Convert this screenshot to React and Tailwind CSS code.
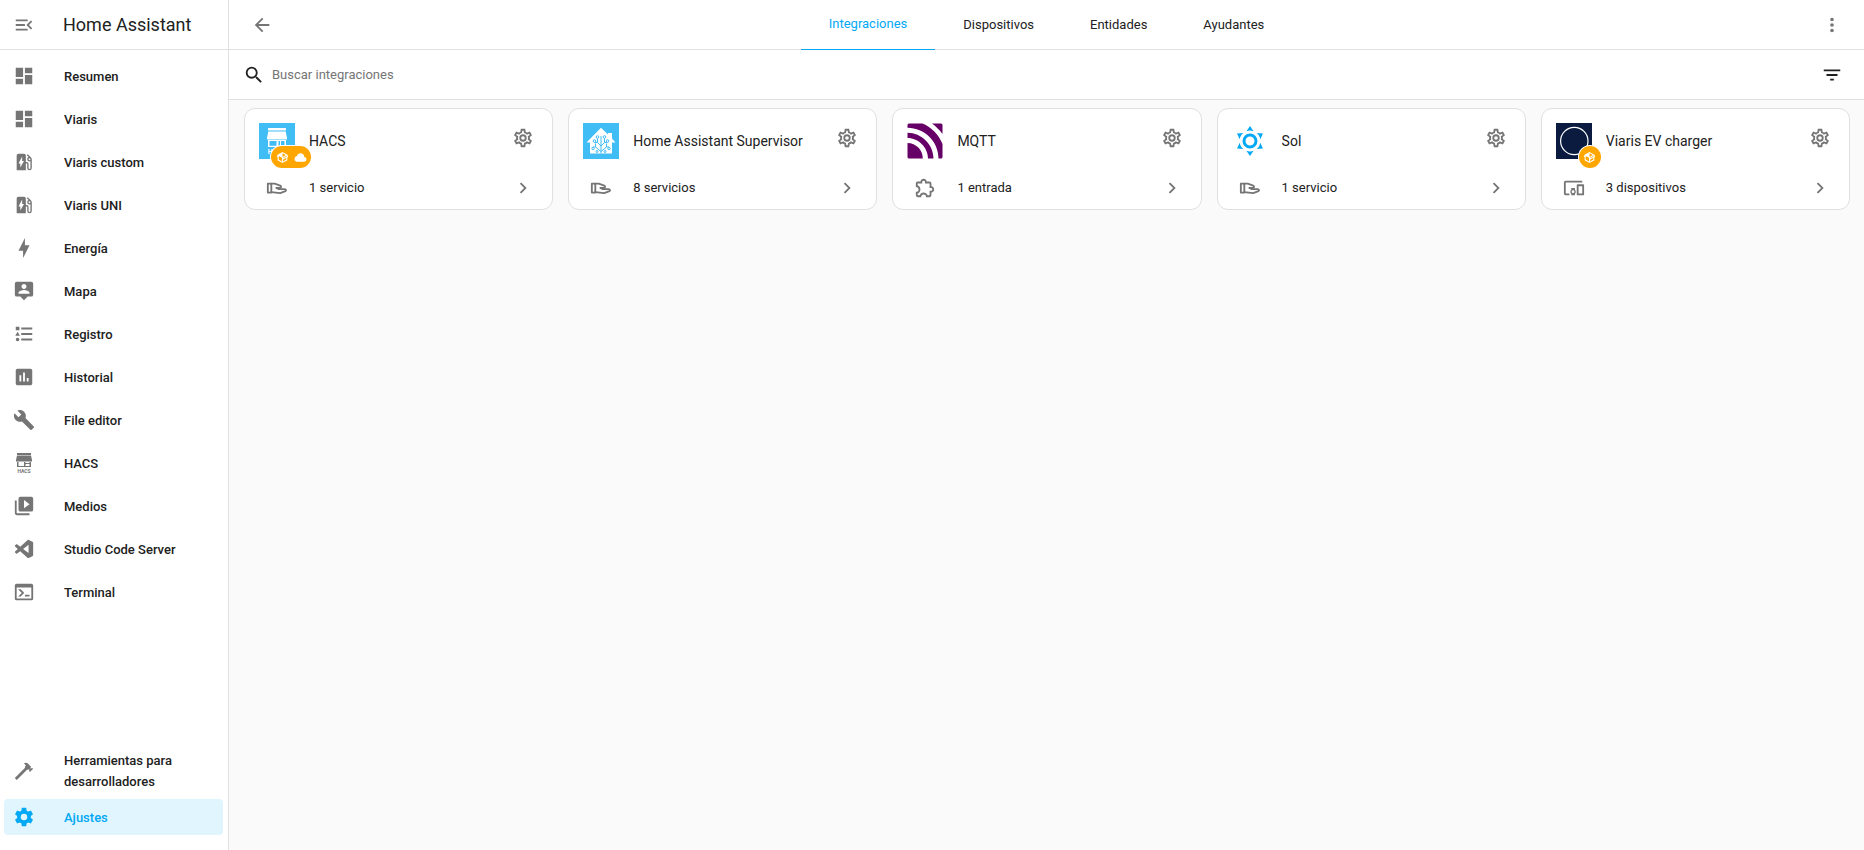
import { useState } from "react";

const icons = {
    menuOpen: "M21,15.61L19.59,17L14.58,12L19.59,7L21,8.39L17.44,12L21,15.61M3,6H16V8H3V6M3,13V11H13V13H3M3,18V16H16V18H3Z",
    dashboard: "M13,3V9H21V3M13,21H21V11H13M3,21H11V15H3M3,13H11V3H3V13Z",
    evStation: "M19.77,7.23L19.78,7.22L16.06,3.5L15,4.56L17.11,6.67C16.17,7.03 15.5,7.93 15.5,9A2.5,2.5 0 0,0 18,11.5C18.36,11.5 18.69,11.42 19,11.29V18.5A1,1 0 0,1 18,19.5A1,1 0 0,1 17,18.5V14A2,2 0 0,0 15,12H14V5A2,2 0 0,0 12,3H6A2,2 0 0,0 4,5V21H14V13.5H15.5V18.5A2.5,2.5 0 0,0 18,21A2.5,2.5 0 0,0 20.5,18.5V9C20.5,8.31 20.22,7.68 19.77,7.23M18,10A1,1 0 0,1 17,9A1,1 0 0,1 18,8A1,1 0 0,1 19,9A1,1 0 0,1 18,10M8,18V13.5H6L10,6V11H12L8,18Z",
    bolt: "M11 15H6L13 1V9H18L11 23V15Z",
    map: "M20,2H4A2,2 0 0,0 2,4V16A2,2 0 0,0 4,18H8L12,22L16,18H20A2,2 0 0,0 22,16V4A2,2 0 0,0 20,2M12,4.3C13.5,4.3 14.7,5.5 14.7,7C14.7,8.5 13.5,9.7 12,9.7C10.5,9.7 9.3,8.5 9.3,7C9.3,5.5 10.5,4.3 12,4.3M18,15H6V14.1C6,12.1 10,11 12,11C14,11 18,12.1 18,14.1V15Z",
    list: "M5,9.5L7.5,14H2.5L5,9.5M3,4H7V8H3V4M5,20A2,2 0 0,0 7,18A2,2 0 0,0 5,16A2,2 0 0,0 3,18A2,2 0 0,0 5,20M9,5V7H21V5H9M9,19H21V17H9V19M9,13H21V11H9V13Z",
    chart: "M9 17H7V10H9V17M13 17H11V7H13V17M17 17H15V13H17V17M19 3H5C3.89 3 3 3.89 3 5V19C3 20.11 3.89 21 5 21H19C20.11 21 21 20.11 21 19V5C21 3.89 20.11 3 19 3Z",
    wrench: "M22.7,19L13.6,9.9C14.5,7.6 14,4.9 12.1,3C10.1,1 7.1,0.6 4.7,1.7L9,6L6,9L1.6,4.7C0.4,7.1 0.9,10.1 2.9,12.1C4.8,14 7.5,14.5 9.8,13.6L18.9,22.7C19.3,23.1 19.9,23.1 20.3,22.7L22.6,20.4C23.1,20 23.1,19.3 22.7,19Z",
    media: "M4,6H2V20A2,2 0 0,0 4,22H18V20H4V6M20,2H8A2,2 0 0,0 6,4V16A2,2 0 0,0 8,18H20A2,2 0 0,0 22,16V4A2,2 0 0,0 20,2M12,14.5V5.5L18,10L12,14.5Z",
    vscode: "M21.29 4.1L17.18 2.12C16.7 1.89 16.13 1.98 15.76 2.36L7.88 9.54L4.45 6.94C4.13 6.69 3.68 6.71 3.38 6.99L2.28 8C1.91 8.31 1.91 8.88 2.27 9.21L5.25 11.93L2.27 14.65C1.91 14.98 1.91 15.55 2.28 15.88L3.38 16.88C3.68 17.15 4.13 17.17 4.45 16.93L7.88 14.33L15.76 21.5C16.13 21.9 16.7 22 17.18 21.76L21.29 19.78C21.73 19.57 22 19.13 22 18.65V5.23C22 4.75 21.73 4.31 21.29 4.1M17 16.47L11.02 11.94L17 7.41V16.47Z",
    console: "M20,19V7H4V19H20M20,3A2,2 0 0,1 22,5V19A2,2 0 0,1 20,21H4A2,2 0 0,1 2,19V5C2,3.89 2.9,3 4,3H20M13,17V15H18V17H13M9.58,13L5.57,9H8.4L11.7,12.3C12.09,12.69 12.09,13.33 11.7,13.72L8.42,17H5.59L9.58,13Z",
    hammer: "M2,19.63L13.43,8.2L12.72,7.5L14.14,6.07L12,3.89C13.2,2.7 15.09,2.7 16.27,3.89L19.87,7.5L18.45,8.91H21.29L22,9.62L18.45,13.21L17.74,12.5V9.62L16.27,11.04L15.56,10.33L4.13,21.76L2,19.63Z",
    cog: "M12,15.5A3.5,3.5 0 0,1 8.5,12A3.5,3.5 0 0,1 12,8.5A3.5,3.5 0 0,1 15.5,12A3.5,3.5 0 0,1 12,15.5M19.43,12.97C19.47,12.65 19.5,12.33 19.5,12C19.5,11.67 19.47,11.34 19.43,11L21.54,9.37C21.73,9.22 21.78,8.95 21.66,8.73L19.66,5.27C19.54,5.05 19.27,4.96 19.05,5.05L16.56,6.05C16.04,5.66 15.5,5.32 14.87,5.07L14.5,2.42C14.46,2.18 14.25,2 14,2H10C9.75,2 9.54,2.18 9.5,2.42L9.13,5.07C8.5,5.32 7.96,5.66 7.44,6.05L4.95,5.05C4.73,4.96 4.46,5.05 4.34,5.27L2.34,8.73C2.21,8.95 2.27,9.22 2.46,9.37L4.57,11C4.53,11.34 4.5,11.67 4.5,12C4.5,12.33 4.53,12.65 4.57,12.97L2.46,14.63C2.27,14.78 2.21,15.05 2.34,15.27L4.34,18.73C4.46,18.95 4.73,19.03 4.95,18.95L7.44,17.94C7.96,18.34 8.5,18.68 9.13,18.93L9.5,21.58C9.54,21.82 9.75,22 10,22H14C14.25,22 14.46,21.82 14.5,21.58L14.87,18.93C15.5,18.67 16.04,18.34 16.56,17.94L19.05,18.95C19.27,19.03 19.54,18.95 19.66,18.73L21.66,15.27C21.78,15.05 21.73,14.78 21.54,14.63L19.43,12.97Z",
    cogOutline: "M12,8A4,4 0 0,1 16,12A4,4 0 0,1 12,16A4,4 0 0,1 8,12A4,4 0 0,1 12,8M12,10A2,2 0 0,0 10,12A2,2 0 0,0 12,14A2,2 0 0,0 14,12A2,2 0 0,0 12,10M10,22C9.75,22 9.54,21.82 9.5,21.58L9.13,18.93C8.5,18.68 7.96,18.34 7.44,17.94L4.95,18.95C4.73,19.03 4.46,18.95 4.34,18.73L2.34,15.27C2.21,15.05 2.27,14.78 2.46,14.63L4.57,12.97L4.5,12L4.57,11L2.46,9.37C2.27,9.22 2.21,8.95 2.34,8.73L4.34,5.27C4.46,5.05 4.73,4.96 4.95,5.05L7.44,6.05C7.96,5.66 8.5,5.32 9.13,5.07L9.5,2.42C9.54,2.18 9.75,2 10,2H14C14.25,2 14.46,2.18 14.5,2.42L14.87,5.07C15.5,5.32 16.04,5.66 16.56,6.05L19.05,5.05C19.27,4.96 19.54,5.05 19.66,5.27L21.66,8.73C21.79,8.95 21.73,9.22 21.54,9.37L19.43,11L19.5,12L19.43,13L21.54,14.63C21.73,14.78 21.79,15.05 21.66,15.27L19.66,18.73C19.54,18.95 19.27,19.04 19.05,18.95L16.56,17.95C16.04,18.34 15.5,18.68 14.87,18.93L14.5,21.58C14.46,21.82 14.25,22 14,22H10M11.25,4L10.88,6.61C9.68,6.86 8.62,7.5 7.85,8.39L5.44,7.35L4.69,8.65L6.8,10.2C6.4,11.37 6.4,12.64 6.8,13.8L4.68,15.36L5.43,16.66L7.86,15.62C8.63,16.5 9.68,17.14 10.87,17.38L11.24,20H12.76L13.13,17.39C14.32,17.14 15.37,16.5 16.14,15.62L18.57,16.66L19.32,15.36L17.2,13.81C17.6,12.64 17.6,11.37 17.2,10.2L19.31,8.65L18.56,7.35L16.15,8.39C15.38,7.5 14.32,6.86 13.12,6.62L12.75,4H11.25Z",
    arrowLeft: "M20,11V13H8L13.5,18.5L12.08,19.92L4.16,12L12.08,4.08L13.5,5.5L8,11H20Z",
    dots: "M12,16A2,2 0 0,1 14,18A2,2 0 0,1 12,20A2,2 0 0,1 10,18A2,2 0 0,1 12,16M12,10A2,2 0 0,1 14,12A2,2 0 0,1 12,14A2,2 0 0,1 10,12A2,2 0 0,1 12,10M12,4A2,2 0 0,1 14,6A2,2 0 0,1 12,8A2,2 0 0,1 10,6A2,2 0 0,1 12,4Z",
    magnify: "M9.5,3A6.5,6.5 0 0,1 16,9.5C16,11.11 15.41,12.59 14.44,13.73L14.71,14H15.5L20.5,19L19,20.5L14,15.5V14.71L13.73,14.44C12.59,15.41 11.11,16 9.5,16A6.5,6.5 0 0,1 3,9.5A6.5,6.5 0 0,1 9.5,3M9.5,5C7,5 5,7 5,9.5C5,12 7,14 9.5,14C12,14 14,12 14,9.5C14,7 12,5 9.5,5Z",
    filter: "M6,13H18V11H6M3,6V8H21V6M10,18H14V16H10V18Z",
    chevron: "M8.59,16.58L13.17,12L8.59,7.41L10,6L16,12L10,18L8.59,16.58Z",
    puzzle: "M22,13.5C22,15.26 20.7,16.72 19,16.96V20A2,2 0 0,1 17,22H13.2V21.7A2.7,2.7 0 0,0 10.5,19C9,19 7.8,20.21 7.8,21.7V22H4A2,2 0 0,1 2,20V16.2H2.3C3.79,16.2 5,15 5,13.5C5,12 3.79,10.8 2.3,10.8H2V7A2,2 0 0,1 4,5H7.04C7.28,3.3 8.74,2 10.5,2C12.26,2 13.72,3.3 13.96,5H17A2,2 0 0,1 19,7V10.04C20.7,10.28 22,11.74 22,13.5M17,15H18.5A1.5,1.5 0 0,0 20,13.5A1.5,1.5 0 0,0 18.5,12H17V7H12V5.5A1.5,1.5 0 0,0 10.5,4A1.5,1.5 0 0,0 9,5.5V7H4V9.12C5.76,9.8 7,11.5 7,13.5C7,15.5 5.75,17.2 4,17.88V20H6.12C6.8,18.25 8.5,17 10.5,17C12.5,17 14.2,18.25 14.88,20H17V15Z",
    devices: "M3 6H21V4H3C1.9 4 1 4.9 1 6V18C1 19.1 1.9 20 3 20H7V18H3V6M13 12H9V13.78C8.39 14.33 8 15.11 8 16C8 16.89 8.39 17.67 9 18.22V20H13V18.22C13.61 17.67 14 16.88 14 16S13.61 14.33 13 13.78V12M11 17.5C10.17 17.5 9.5 16.83 9.5 16S10.17 14.5 11 14.5 12.5 15.17 12.5 16 11.83 17.5 11 17.5M22 8H16C15.5 8 15 8.5 15 9V19C15 19.5 15.5 20 16 20H22C22.5 20 23 19.5 23 19V9C23 8.5 22.5 8 22 8M21 18H17V10H21V18Z",
    package: "M2,10.96C1.5,10.68 1.35,10.07 1.63,9.59L3.13,7C3.24,6.8 3.41,6.66 3.6,6.58L11.43,2.18C11.59,2.06 11.79,2 12,2C12.21,2 12.41,2.06 12.57,2.18L20.47,6.62C20.66,6.72 20.82,6.88 20.91,7.08L22.36,9.6C22.64,10.08 22.47,10.69 22,10.96L21,11.54V16.5C21,16.88 20.79,17.21 20.47,17.38L12.57,21.82C12.41,21.94 12.21,22 12,22C11.79,22 11.59,21.94 11.43,21.82L3.53,17.38C3.21,17.21 3,16.88 3,16.5V10.96C2.7,11.13 2.32,11.14 2,10.96M12,4.15V4.15L12,10.85V10.85L17.96,7.5L12,4.15M5,15.91L11,19.29V12.58L5,9.21V15.91M19,15.91V12.69L14,15.59C13.67,15.77 13.3,15.76 13,15.6V19.29L19,15.91M13.85,13.36L20.13,9.73L19.55,8.72L13.27,12.35L13.85,13.36Z",
    cloud: "M6.5 20Q4.22 20 2.61 18.43 1 16.85 1 14.58 1 12.63 2.17 11.1 3.35 9.57 5.25 9.15 5.88 6.85 7.75 5.43 9.63 4 12 4 14.93 4 16.96 6.04 19 8.07 19 11 20.73 11.2 21.86 12.5 23 13.78 23 15.5 23 17.38 21.69 18.69 20.38 20 18.5 20Z",
    sunny: "M12,7A5,5 0 0,1 17,12A5,5 0 0,1 12,17A5,5 0 0,1 7,12A5,5 0 0,1 12,7M12,9A3,3 0 0,0 9,12A3,3 0 0,0 12,15A3,3 0 0,0 15,12A3,3 0 0,0 12,9M12,2L14.39,5.42C13.65,5.15 12.84,5 12,5C11.16,5 10.35,5.15 9.61,5.42L12,2M3.34,7L7.5,6.65C6.9,7.16 6.36,7.78 5.94,8.5C5.5,9.24 5.25,10 5.11,10.79L3.34,7M3.36,17L5.12,13.23C5.26,14 5.53,14.78 5.95,15.5C6.37,16.24 6.91,16.86 7.5,17.37L3.36,17M20.65,7L18.88,10.79C18.74,10 18.47,9.23 18.05,8.5C17.63,7.78 17.1,7.15 16.5,6.64L20.65,7M20.64,17L16.5,17.36C17.09,16.85 17.62,16.22 18.04,15.5C18.46,14.77 18.73,14 18.87,13.21L20.64,17M12,22L9.59,18.56C10.33,18.83 11.14,19 12,19C12.82,19 13.63,18.83 14.37,18.56L12,22Z",
};

const Icon = ({ name, className = "size-[22px]" }) => (
    <svg viewBox="0 0 24 24" fill="currentColor" aria-hidden="true" className={`shrink-0 ${className}`}>
        <path d={icons[name]} />
    </svg>
);

const HandIcon = () => (
    <svg viewBox="0 0 24 24" fill="none" stroke="currentColor" strokeWidth="2" strokeLinejoin="round" strokeLinecap="round" aria-hidden="true" className="size-[22px] shrink-0">
        <path d="M2 7.3H5.800V17H2Z" />
        <path d="M5.800 7.3H9.500L15.500 9.400C17 10 16.700 12 15.300 12H11.500" />
        <path d="M11.500 12L14 13.200H20.300C22 13.300 22.300 14.900 21.200 15.400L15.500 17.600L5.800 16.500" />
    </svg>
);

const HacsIcon = () => (
    <svg viewBox="0 0 22 22" fill="currentColor" aria-hidden="true" className="size-[22px] shrink-0">
        <path d="M4 1H18V3H4ZM4 3.500H18L19 8V9.500H3V8ZM4 10H5.500V14H11V10H12.500V11H16.500V10H18V15H4ZM12.500 12V14H16.500V12Z" fillRule="evenodd" />
        <text x="11" y="20.500" textAnchor="middle" fontSize="5" fontWeight="700" fontFamily="Roboto, sans-serif">HACS</text>
    </svg>
);

const HacsLogo = () => (
    <svg viewBox="0 0 36 36" aria-hidden="true" className="size-9">
        <path fill="#41bdf5" d="M0 0H36V36H0Z" />
        <g fill="#fff">
            <rect x="9" y="5" width="18" height="2.500" rx="0.500" />
            <path d="M9.300 8.500H26.700L28 15V16.500H8V15Z" />
            <path fillRule="evenodd" d="M9 17H27V24H9ZM10.500 18V22.700H17.500V18ZM19.500 18V22.700H21V18ZM22 18V22.700H25.500V18Z" />
            <text x="18" y="31" textAnchor="middle" fontSize="7" fontWeight="700" fontFamily="Roboto, sans-serif">HACS</text>
        </g>
    </svg>
);

const SupervisorLogo = () => (
    <svg viewBox="0 0 36 36" aria-hidden="true" className="size-9">
        <path fill="#41bdf5" d="M0 0H36V36H0Z" />
        <path fill="#fff" d="M18 4.800L25 11.500V10H29V15.500L32.500 19.500H29V30.500H7V19.500H3.500Z" />
        <g fill="none" stroke="#41bdf5" strokeWidth="1">
            <path d="M18 30.500V13M18 28.500L12.500 24V20.500M18 23L14.500 19.500V15.500M18 28.500L23.500 24V20.500M18 23L21.500 19.500V15.500M12.500 24H10M23.500 24H26M14.500 19.500H11.500M21.500 19.500H24.500" />
            <circle cx="14.500" cy="14" r="1.300" />
            <circle cx="21.500" cy="14" r="1.300" />
            <circle cx="11.500" cy="18" r="1.300" />
            <circle cx="24.500" cy="18" r="1.300" />
            <circle cx="10" cy="25.500" r="1.200" />
            <circle cx="26" cy="25.500" r="1.200" />
            <circle cx="14" cy="28.500" r="1" />
            <circle cx="22" cy="28.500" r="1" />
        </g>
    </svg>
);

const MqttLogo = () => (
    <svg viewBox="0 0 36 36" aria-hidden="true" className="size-9">
        <g fill="#606">
            <path d="M0.500 20C9 20 15.800 27 15.800 35.500H2Q0.500 35.500 0.500 34Z" />
            <path d="M0.500 9.700C14.500 9.700 26.500 21.500 26.500 35.500H21C21 24.500 11.500 15 0.500 15Z" />
            <path d="M0.500 2Q0.500 0.500 2 0.500H15.500C24.500 4 32 12 35.500 21V34Q35.500 35.500 34 35.500H31.500C31.500 18.500 17.500 4.700 0.500 4.700Z" />
            <path d="M25 0.500H34Q35.500 0.500 35.500 2V11C32.500 7 29 3.500 25 0.500Z" />
        </g>
    </svg>
);

const ViarisLogo = () => (
    <svg viewBox="0 0 36 36" aria-hidden="true" className="size-9">
        <path fill="#0a1b3f" d="M0 0H36V36H0Z" />
        <circle cx="18.300" cy="18" r="13.700" fill="none" stroke="#fff" strokeWidth="1.200" />
    </svg>
);

const menu = [
    { label: "Resumen", icon: "dashboard" },
    { label: "Viaris", icon: "dashboard" },
    { label: "Viaris custom", icon: "evStation" },
    { label: "Viaris UNI", icon: "evStation" },
    { label: "Energía", icon: "bolt" },
    { label: "Mapa", icon: "map" },
    { label: "Registro", icon: "list" },
    { label: "Historial", icon: "chart" },
    { label: "File editor", icon: "wrench" },
    { label: "HACS", icon: "hacs" },
    { label: "Medios", icon: "media" },
    { label: "Studio Code Server", icon: "vscode" },
    { label: "Terminal", icon: "console" },
];

const tabs = ["Integraciones", "Dispositivos", "Entidades", "Ayudantes"];

const integrations = [
    { name: "HACS", logo: <HacsLogo />, badges: ["package", "cloud"], icon: "hand", detail: "1 servicio" },
    { name: "Home Assistant Supervisor", logo: <SupervisorLogo />, badges: [], icon: "hand", detail: "8 servicios" },
    { name: "MQTT", logo: <MqttLogo />, badges: [], icon: "puzzle", detail: "1 entrada" },
    { name: "Sol", logo: <Icon name="sunny" className="size-9 text-[#03a9f4]" />, badges: [], icon: "hand", detail: "1 servicio" },
    { name: "Viaris EV charger", logo: <ViarisLogo />, badges: ["package"], icon: "devices", detail: "3 dispositivos" },
];

const MenuItem = ({ label, icon, active }) => (
    <a
        href="#"
        className={`flex min-h-9 items-center gap-[29px] rounded px-[9px] text-[13px] leading-[21px] font-medium ${active ? "bg-[#e1f5fe] text-[#03a9f4]" : "text-[#212121]"}`}
    >
        <span className={active ? "text-[#03a9f4]" : "text-[#757575]"}>
            {icon === "hacs" ? <HacsIcon /> : <Icon name={icon} />}
        </span>
        <span>{label}</span>
    </a>
);

const IntegrationCard = ({ name, logo, badges, icon, detail }) => (
    <article className="flex flex-col rounded-[11px] border border-[#e0e0e0] bg-white">
        <div className="flex items-start gap-[14px] pt-[14px] pr-[9px] pl-[14px]">
            <div className="relative shrink-0">
                {logo}
                {badges.length > 0 && (
                    <div className={`absolute -bottom-[9px] flex h-[22px] items-center justify-center gap-[5px] rounded-full bg-[#ffa600] text-white ring-1 ring-white ${badges.length > 1 ? "-right-4 w-10" : "-right-[9px] w-[22px]"}`}>
                        {badges.map((badge) => (
                            <Icon key={badge} name={badge} className="size-[13px]" />
                        ))}
                    </div>
                )}
            </div>
            <h2 className="min-w-0 flex-1 truncate text-sm leading-9">{name}</h2>
            <button type="button" aria-label={`Configurar ${name}`} className="flex h-[30px] w-10 shrink-0 items-center justify-center text-[#757575]">
                <Icon name="cogOutline" />
            </button>
        </div>
        <a href="#" className="mt-[7px] flex h-[43px] items-center gap-[14px] pr-[9px] pl-[14px] text-[13px]">
            <span className="flex w-9 justify-center text-[#757575]">
                {icon === "hand" ? <HandIcon /> : <Icon name={icon} />}
            </span>
            <span className="flex-1">{detail}</span>
            <span className="flex w-10 justify-center text-[#757575]">
                <Icon name="chevron" />
            </span>
        </a>
    </article>
);

const App = () => {
    const [tab, setTab] = useState("Integraciones");
    const [search, setSearch] = useState("");

    return (
        <div className="flex min-h-screen bg-[#fafafa] font-['Roboto',sans-serif] text-[#212121]">
            {/* Sidebar */}
            <aside className="flex w-[229px] shrink-0 flex-col border-r border-[#e0e0e0] bg-white">
                <div className="flex h-[50px] items-center gap-[28px] border-b border-[#e0e0e0] px-[13px]">
                    <button type="button" aria-label="Contraer barra lateral" className="text-[#757575]">
                        <Icon name="menuOpen" />
                    </button>
                    <h1 className="text-lg">Home Assistant</h1>
                </div>
                <nav className="flex flex-1 flex-col gap-[7px] px-1 pt-2 pb-[15px]">
                    {menu.map((item) => (
                        <MenuItem key={item.label} {...item} />
                    ))}
                    <div className="mt-auto flex w-[219px] flex-col gap-[7px]">
                        <MenuItem label="Herramientas para desarrolladores" icon="hammer" />
                        <MenuItem label="Ajustes" icon="cog" active />
                    </div>
                </nav>
            </aside>

            <div className="flex min-w-0 flex-1 flex-col">
                {/* Toolbar */}
                <header className="flex h-[50px] items-center border-b border-[#e0e0e0] bg-white px-[11px] text-[#757575]">
                    <button type="button" aria-label="Atrás" className="flex w-[43px] justify-center">
                        <Icon name="arrowLeft" />
                    </button>
                    <nav className="-mb-px flex flex-1 justify-center self-stretch">
                        {tabs.map((name) => (
                            <button
                                key={name}
                                type="button"
                                onClick={() => setTab(name)}
                                className={`border-b px-[28px] text-[13px] ${tab === name ? "border-[#03a9f4] pb-[2px] text-[#03a9f4]" : "border-transparent text-[#212121]"}`}
                            >{name}
                            </button>
                        ))}
                    </nav>
                    <button type="button" aria-label="Más opciones" className="flex w-[43px] justify-center">
                        <Icon name="dots" />
                    </button>
                </header>

                {/* Search */}
                <div className="flex h-[50px] items-center border-b border-[#e0e0e0] bg-white pr-[11px] pl-[14px]">
                    <label htmlFor="search" aria-label="Buscar integraciones">
                        <Icon name="magnify" />
                    </label>
                    <input
                        id="search"
                        type="text"
                        placeholder="Buscar integraciones"
                        className="h-full flex-1 px-[7px] text-[13px] outline-none placeholder:text-[#757575]"
                        value={search}
                        onChange={(e) => setSearch(e.target.value)}
                    />
                    <button type="button" aria-label="Filtrar" className="flex w-[43px] justify-center">
                        <Icon name="filter" />
                    </button>
                </div>

                <main className="grid grid-cols-[repeat(auto-fill,minmax(270px,1fr))] gap-[15px] py-2 pr-[14px] pl-[15px]">
                    {integrations
                        .filter((item) => item.name.toLowerCase().includes(search.toLowerCase()))
                        .map((item) => (
                            <IntegrationCard key={item.name} {...item} />
                        ))}
                </main>
            </div>
        </div>
    );
};

export default App;
